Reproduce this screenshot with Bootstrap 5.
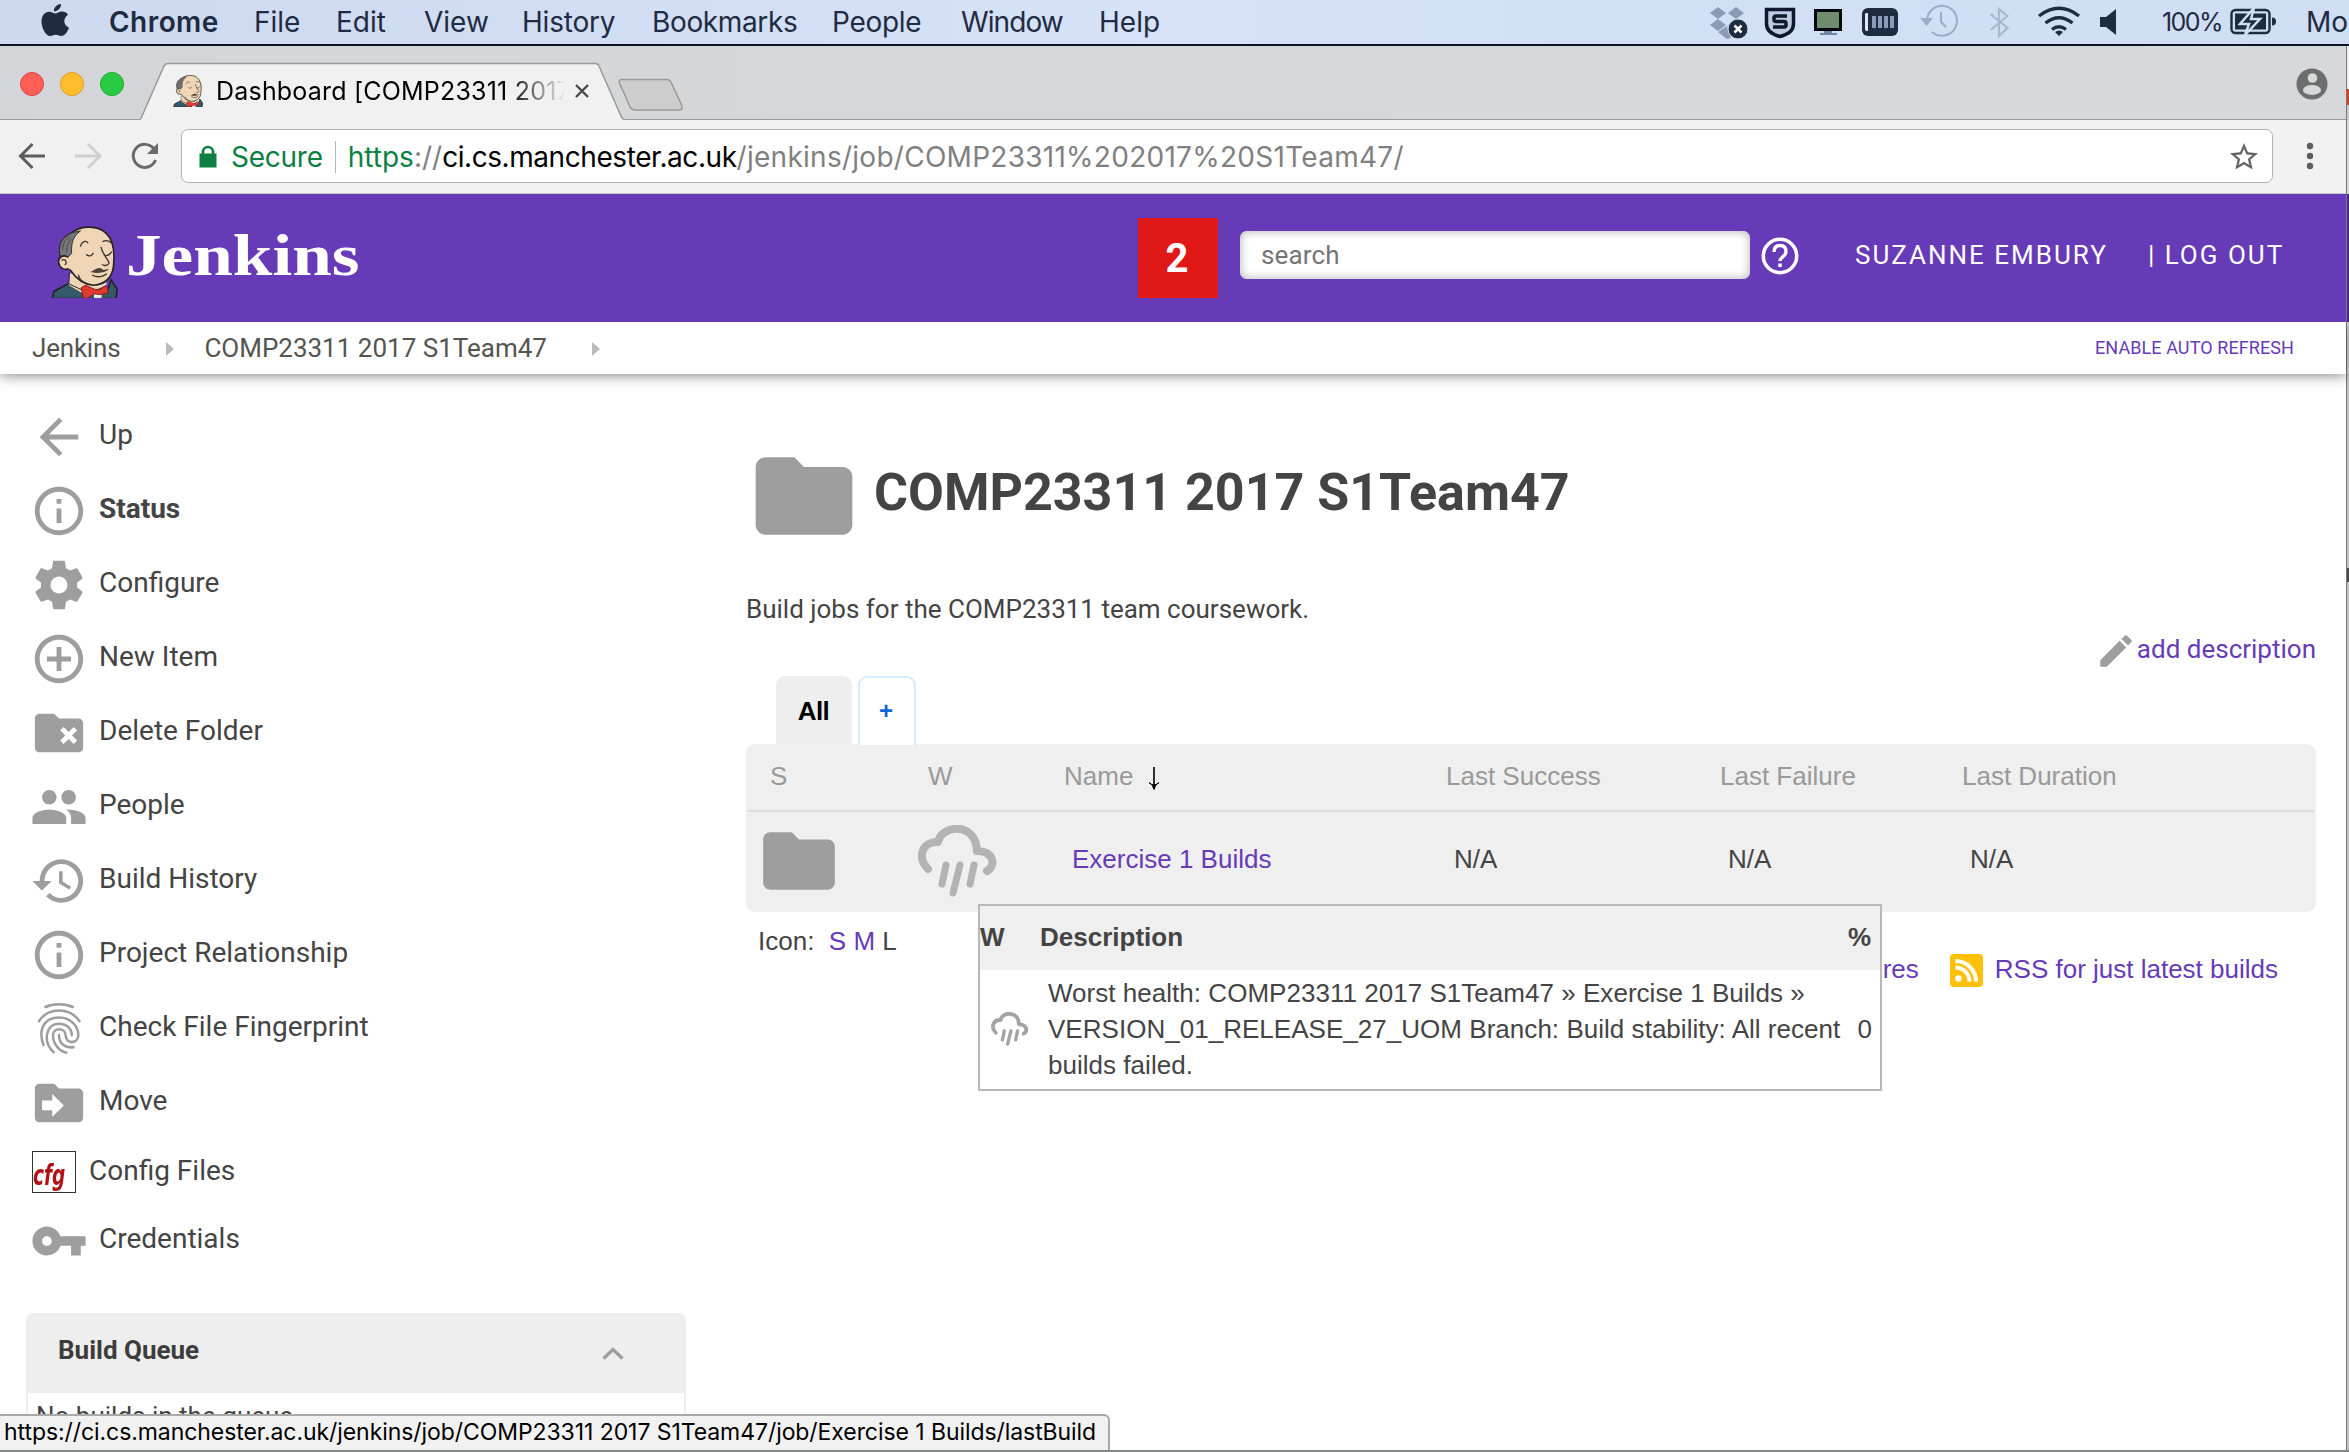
<!DOCTYPE html>
<html lang="en">
<head>
<meta charset="utf-8">
<title>Dashboard [COMP23311 2017 S1Team47]</title>
<link href="https://cdn.jsdelivr.net/npm/bootstrap@5.3.0/dist/css/bootstrap.min.css" rel="stylesheet">
<style>
html,body{height:1452px;overflow:hidden}
body{font:26px/36px Roboto,sans-serif;color:#444;background:#fff}
svg{flex:none;display:block}
a{color:#673ab7;text-decoration:none}
.inter{font-family:Inter,sans-serif}
.helv{font-family:"Liberation Sans",sans-serif}
.ln{white-space:nowrap}
/* system menu bar */
.menubar{height:46px;background:linear-gradient(90deg,#ccd9ee,#d5e2f7 50%,#cfdef5);border-bottom:2px solid #0b1426;font-size:28px;line-height:44px;color:#1e2b42}
.menubar li{flex:none}
.menubar li:nth-child(1){width:109px}.menubar li:nth-child(2){width:145px;font-weight:600;letter-spacing:.45px}
.menubar li:nth-child(3){width:82px}.menubar li:nth-child(4){width:88px}.menubar li:nth-child(5){width:98px}
.menubar li:nth-child(6){width:130px;letter-spacing:-.2px}.menubar li:nth-child(7){width:180px;letter-spacing:-.36px}
.menubar li:nth-child(8){width:129px;letter-spacing:-.3px}.menubar li:nth-child(9){width:138px;letter-spacing:-.9px}
.pct{width:69px;padding-left:2px;font-size:25px;letter-spacing:-1.6px}
.clock{width:44px;overflow:hidden;padding-left:1px}
/* browser window */
.tabstrip{height:73px;background:linear-gradient(90deg,#d4d5d8,#d5d8da 55%,#d7d8db)}
.lights{width:140px;padding:26px 0 0 20px;gap:16px}
.lights i{width:24px;height:24px;border-radius:50%;border:1px solid #e0443e;background:#ff5f57}
.lights i:nth-child(2){background:#ffbd2e;border-color:#dea123}.lights i:nth-child(3){background:#28ca41;border-color:#1aab29}
.tabx{width:484px;height:58px;margin-top:16px;padding-left:33px;z-index:2}
.tabx .shape{position:absolute;left:0;top:0}
.tabt{width:356px;margin-left:13px;overflow:hidden;font-size:25px;letter-spacing:.2px;line-height:56px;color:#000;-webkit-mask-image:linear-gradient(90deg,#000 82%,transparent 98%)}
.newtab{margin-left:-8px}
.toolbar{height:75px;background:#f1f1f1;border-top:1px solid #9b9b9d;border-bottom:1px solid #c6c6c6}
.omni{width:2092px;height:54px;margin-top:9px;padding-top:1px;background:#fff;border:1px solid #b3b3b3;border-radius:7px;font-size:28px;line-height:52px;color:#808080}
.grn{color:#0b8043}
.sepv{width:1px;height:32px;background:#b5b5b5;margin:0 12px 0 12px}
/* jenkins header */
.jhead{height:128px;background:#673ab7;padding:0 0 6px 51px;color:#fff}
.wordmark{font:bold 60px/60px "Liberation Serif",serif;transform:scaleX(1.187);transform-origin:0 50%;margin-left:8px;margin-bottom:1px}
.alertbox{width:80px;height:80px;margin-top:6px;margin-right:22px;padding-right:2px;background:#e01818;font-size:40px;line-height:81px}
.jsearch{width:510px;height:48px;margin-top:-1px;border-radius:7px;border:0;background:#fff;box-shadow:inset 0 0 8px 1px #bbb;color:#757575;font-size:26px;padding:1px 0 0 21px;letter-spacing:.15px}
.user{letter-spacing:2px}
.crumbs{height:52px;padding:0 52px 1px 32px;background:#fff;box-shadow:0 2px 12px rgba(0,0,0,.45);color:#54554f;position:relative}
.jhead{position:relative;z-index:2}
.crumbs{z-index:1}
.refresh{font-size:18px;letter-spacing:.09px;padding-top:1px}
.strip{width:3px;border-left:1px solid #77777a;background:linear-gradient(#efefef 0 43px,#d8401e 43px 59px,#c9c9c9 59px 74px,#d5d5d5 74px 148px,#4d2c87 148px 276px,#dadada 276px 328px,#c3c3c3 328px 522px,#4a4a4a 522px 536px,#c3c3c3 536px)}
/* side panel */
.side{width:746px;padding-top:24px}
.task{height:74px;padding-left:30px;font-size:28px;color:#444}
.task svg{fill:#9e9e9e;margin-top:4px;margin-right:11px}
.cfgico{width:44px;height:42px;border:1px solid #333;margin:1px 13px 0 2px;font:italic bold 29px/46px "DejaVu Sans",sans-serif;color:#b01116;letter-spacing:0}
.cfgico span{display:block;transform:scaleX(.64);transform-origin:0 0}
.queue{width:660px;margin:40px 0 0 26px;border:2px solid #eee;border-radius:8px 8px 0 0;height:170px}
.queue h2{height:78px;margin:0;padding:0 60px 7px 30px;background:#eee;font-size:26px;font-weight:700;color:#3c3c3c}
/* main panel */
.mainp{width:1570px;padding-top:64px}
.mainp h1{font-size:52px;line-height:60px;font-weight:700;margin:0;padding:0 0 6px 12px;color:#444}
.views{height:68px;margin-top:4px;padding-left:30px;gap:6px}
.views a{height:69px;line-height:70px;font-weight:700;border-radius:9px 9px 0 0;text-align:center}
.views .on{width:76px;background:#eee;color:#000;letter-spacing:-.6px;padding-right:1px}
.views .plus{width:58px;border:2px solid #d5ecfc;border-bottom:0;background:#fff;color:#0b64d8;font-size:24px;line-height:66px;padding-right:2px}
.jobs{height:168px;background:#efefef;border-radius:9px;padding:0 2px}
.jobs table{table-layout:fixed;width:1566px;margin:0;--bs-table-bg:transparent;color:#444}
.jobs .table>thead>tr>th{height:67px;font-weight:400;color:#999;padding:0 0 2px 14px;line-height:64px;border-bottom:2px solid #dcdcdc}
.jobs .table>thead>tr>th.ic{padding-left:22px}
.jobs .table>tbody>tr>td{height:100px;padding:0 0 6px 22px;border:0;vertical-align:middle}
.jobs .table>tbody>tr>td.ic{padding:0 0 2px 8px}
.tip{left:978px;top:904px;width:904px;height:187px;border:2px solid #b8b8b8;background:#fff;z-index:5}
.tip .th{height:64px;background:#efefef;font-weight:700;padding:0 9px 0 0;line-height:62px}
.statusurl{left:0;top:1414px;width:1110px;height:36px;background:#f1f1f1;border:solid #a9a9a9;border-width:2px 2px 0 0;border-radius:0 6px 0 0;font-size:23px;line-height:33px;letter-spacing:-.07px;color:#000;padding-left:4px;z-index:6}
.winbottom{left:0;top:1450px;width:2349px;height:2px;background:#85868a;z-index:7}
</style>
</head>
<body class="d-flex flex-column position-relative">
<svg width="0" height="0" class="position-absolute">
<symbol id="butler" viewBox="33 48 202 216">
<path d="M37 266L42 244L88 220L120 240L205 238L214 210L233 238L228 266Z" fill="#35586a" stroke="#1d2326" stroke-width="5"/>
<path d="M90 190L86 225L128 250L170 240L200 225L200 200Z" fill="#f0d6b7"/>
<path d="M88 188L87 222L126 240" fill="none" stroke="#2a2522" stroke-width="3"/>
<path d="M62 142C52 105 64 82 98 66C125 45 175 46 198 68C222 90 225 125 222 160C222 190 205 225 160 226C125 222 108 205 94 184Z" fill="#f0d6b7" stroke="#262220" stroke-width="5"/>
<path d="M62 142C52 105 64 84 96 68L122 62C98 80 94 100 95 130L84 142C78 134 66 136 62 142Z" fill="#77767a" stroke="#333" stroke-width="3"/>
<path d="M68 120C68 100 76 88 92 80M80 125C80 108 84 98 96 86" fill="none" stroke="#4a4a4c" stroke-width="3"/>
<path d="M84 142C70 132 54 142 56 158C58 174 74 182 88 176" fill="#f0d6b7" stroke="#262220" stroke-width="5"/>
<path d="M84 146L98 138L100 180L86 176Z" fill="#f0d6b7"/>
<path d="M66 150C76 146 82 154 76 164M122 108C126 94 138 90 144 98M190 94C198 90 208 92 214 98M140 134C148 140 156 138 160 130M194 136C202 138 210 134 215 126M184 112C188 134 208 150 208 160C204 168 192 168 188 164M158 196C174 204 192 200 200 192M116 196C118 206 124 212 130 216" fill="none" stroke="#3a322c" stroke-width="4" stroke-linecap="round"/>
<path d="M152 186C164 182 172 170 186 176C192 184 200 176 208 178C196 188 176 192 152 186Z" fill="#4d4039"/>
<circle cx="174" cy="258" r="12" fill="#e8e8e8"/>
<path d="M124 234L136 226L164 238L178 240L198 228L204 234L204 250L182 254L164 252L140 266L130 262Z" fill="#df3a2f" stroke="#8e1b16" stroke-width="3"/>
</symbol>
<symbol id="fold" viewBox="0 0 24 24"><path d="M10 4H4c-1.1 0-2 .9-2 2v12c0 1.1.9 2 2 2h16c1.100 0 2-.9 2-2V8c0-1.100-.9-2-2-2h-8z" fill="#9e9e9e"/></symbol>
<symbol id="rain" viewBox="0 0 80 72"><g fill="none" stroke-width="8" stroke-linecap="round" stroke-linejoin="round"><path d="M11 44C-1 32 6 16 21 17C25 -1 59 -3 60 26C76 26 80 40 70 46"/><path d="M29 40L25 59M43 40L36 68M57 40L53 59" stroke-width="7"/></g></symbol>
</svg>

<nav class="menubar inter d-flex">
<ul class="list-unstyled d-flex m-0 ln">
<li><svg width="80" height="44" viewBox="0 0 80 44"><path d="M61 4c.4 4-3.500 7.500-7 7.400C53.500 7.500 57.500 4 61 4zM55 13.500c2 0 4-2 7-2 2.500 0 4.600 1.200 6 3.200-5.500 3.500-4.500 10.500 1 13-1.500 4-4.500 8.300-7.500 8.300-2.200 0-3.200-1.300-5.800-1.300S52 36 50 36c-4 0-8.500-8-8.500-14.500 0-6.300 3.800-9.700 7.500-9.700 2.500 0 4.500 1.700 6 1.700z" fill="#1e2b42"/></svg></li>
<li>Chrome</li><li>File</li><li>Edit</li><li>View</li><li>History</li><li>Bookmarks</li><li>People</li><li>Window</li><li>Help</li>
</ul>
<div class="d-flex ms-auto ln">
<svg width="50" height="44" viewBox="1706 0 50 44"><g fill="#8b9ab5"><path d="M1710 13l8-6 8 6-8 6zM1728 13l8-6 8 6-8 6zM1710 25l8-6 8 6-8 6zM1728 25l8-6 8 6-8 6zM1718 32l9-6 4 12-4 1z"/></g><circle cx="1738" cy="29" r="10" fill="#1e2b42" stroke="#d3e0f5"/><path d="M1734.500 25.500l7 7m0-7l-7 7" stroke="#fff" stroke-width="2.500"/></svg>
<svg width="50" height="44" viewBox="1756 0 50 44"><path d="M1766.500 9.500h27V24q0 9-13.500 12.500Q1766.500 33 1766.500 24z" fill="#bccbe6" stroke="#10182c" stroke-width="3.500"/><path d="M1787 16h-11q-2 0-2 2v1.500q0 2 2 2h8q2 0 2 2V25q0 2-2 2h-11" fill="none" stroke="#10182c" stroke-width="3.500"/></svg>
<svg width="50" height="44" viewBox="1806 0 50 44"><path d="M1815.500 10.500h25v19h-25z" fill="#6f8d6e" stroke="#05080f" stroke-width="3"/><path d="M1824 31h8v2h5v2h-17v-2h4z" fill="#6e83a6"/></svg>
<svg width="50" height="44" viewBox="1856 0 50 44"><rect x="1862" y="8" width="36" height="28" rx="6" fill="#1e2b42"/><path d="M1865 14v15q0 2 2 2h1V13h-1q-2 0-2 1z" fill="#dfe9fa"/><path d="M1872 16h4v12h-4zM1878 16h4v12h-4zM1884 16h4v12h-4zM1890 16h4v12h-4z" fill="#8b9ab5"/></svg>
<svg width="70" height="44" viewBox="1906 0 70 44"><path d="M1927 21a15 15 0 1 1 5 11M1941 12v10l5 5" fill="none" stroke="#9dadc8" stroke-width="2"/><path d="M1920 18h13l-6.500 8z" fill="#9dadc8"/></svg>
<svg width="48" height="44" viewBox="1976 0 48 44"><path d="M1990.500 14l17 14-8.500 8V9l8.500 7-17 14" fill="none" stroke="#a9b8d1" stroke-width="2.200"/></svg>
<svg width="68" height="44" viewBox="2024 0 68 44"><g fill="none" stroke="#1e2b42" stroke-width="3.400"><path d="M2039 16q20-15.500 40 0M2045.500 23q13.500-10.500 27 0M2052 29.500q7-5.500 14 0"/></g><path d="M2059 36l-4-4q4-3 8 0z" fill="#1e2b42"/></svg>
<svg width="68" height="44" viewBox="2092 0 68 44"><path d="M2100 17h6l10-8v26l-10-8h-6z" fill="#1e2b42"/></svg>
<span class="pct">100%</span>
<svg width="76" height="44" viewBox="2229 0 76 44"><rect x="2231.500" y="10" width="38" height="23" rx="4" fill="none" stroke="#1e2b42" stroke-width="2.400"/><rect x="2235" y="13.500" width="31" height="16" fill="#1e2b42"/><path d="M2272 17.500q4 0 4 4t-4 4z" fill="#1e2b42"/><path d="M2254 8l-14 16h9l-4 11 15-16h-9z" fill="#1e2b42" stroke="#d0dff5" stroke-width="2.500"/></svg>
<span class="clock">Mon</span>
</div>
</nav>

<div class="d-flex flex-grow-1">
<div class="d-flex flex-column flex-grow-1">
<div class="tabstrip d-flex">
<div class="lights d-flex"><i></i><i></i><i></i></div>
<div class="tabx d-flex align-items-center position-relative">
<svg class="shape" width="484" height="59" viewBox="0 0 484 59"><path d="M-1 57.500Q1 57 2 54L24 4Q25.500 1.500 28 1.500H455Q458 1.500 459 4L481 54Q482 57 485 57.500V59H-1z" fill="#f1f1f1"/><path d="M-1 57.500Q1 57 2 54L24 4Q25.500 1.500 28 1.500H455Q458 1.500 459 4L481 54Q482 57 485 57.500" fill="none" stroke="#98999c" stroke-width="1.500"/></svg>
<svg class="position-relative" width="30" height="32"><use href="#butler"/></svg>
<span class="tabt inter ln position-relative">Dashboard [COMP23311 2017</span>
<svg class="position-relative" width="20" height="20" viewBox="0 0 20 20"><path d="M4 4l12 12M16 4L4 16" stroke="#4a4a4a" stroke-width="2.400"/></svg>
</div>
<svg class="newtab" width="70" height="73" viewBox="616 46 70 73"><path d="M622 79.500H666Q670 79.500 671.500 83L682 106Q683 110 679 110H636Q632 110 630 107L619.500 83Q618.500 79.500 622 79.500z" fill="#cdcdcd" stroke="#98999b" stroke-width="1.500"/></svg>
<svg class="ms-auto" width="50" height="73" viewBox="2296 46 50 73"><circle cx="2312" cy="84" r="15.500" fill="#6d6d6d"/><circle cx="2312.500" cy="78" r="4.800" fill="#d7d8db"/><ellipse cx="2312" cy="90" rx="9" ry="5" fill="#d7d8db"/></svg>
</div>
<div class="toolbar d-flex">
<svg width="181" height="73" viewBox="0 120 181 73"><g fill="none" stroke-width="3"><path d="M45 156H21M32.500 144L20.500 156l12 12" stroke="#5d5d5d"/><path d="M75 156h24M88 144l12 12-12 12" stroke="#cfcfcf"/><path d="M154 149A11.500 11.500 0 1 0 155.500 160" stroke="#6a6a6a"/></g><path d="M158 143v11h-11z" fill="#6a6a6a"/></svg>
<div class="omni inter d-flex align-items-center ln">
<svg class="ms-3" width="33" height="52" viewBox="198 130 33 52"><path d="M199.500 152.500h17v14h-17z" fill="#0b8043"/><path d="M203 154v-3a5 5 0 0 1 10 0v3" fill="none" stroke="#0b8043" stroke-width="2.600"/></svg>
<span class="grn" style="letter-spacing:-.25px">Secure</span><span class="sepv"></span><span class="grn">https</span><span>://</span><span class="text-black" style="letter-spacing:-.43px">ci.cs.manchester.ac.uk</span><span style="letter-spacing:.27px">/jenkins/job/COMP23311%202017%20S1Team47/</span>
<svg class="ms-auto" width="28" height="28" viewBox="2 2 20 20" style="margin-right:14px"><path d="M22 9.240l-7.190-.62L12 2 9.190 8.630 2 9.240l5.460 4.730L5.820 21 12 17.270 18.180 21l-1.630-7.030zM12 15.400l-3.760 2.270 1-4.280-3.320-2.880 4.380-.38L12 6.100l1.710 4.040 4.380.38-3.320 2.880 1 4.280z" fill="#666"/></svg>
</div>
<svg width="73" height="73" viewBox="2273 120 73 73" fill="#5d5d5d"><circle cx="2310" cy="146" r="3.200"/><circle cx="2310" cy="156" r="3.200"/><circle cx="2310" cy="166" r="3.200"/></svg>
</div>

<header class="jhead d-flex align-items-center ln">
<svg width="67" height="72" style="margin-top:14px"><use href="#butler"/></svg>
<span class="wordmark">Jenkins</span>
<div class="d-flex align-items-center ms-auto" style="width:1208px">
<span class="alertbox text-center fw-bold">2</span>
<input class="jsearch" type="text" value="search" aria-label="search">
<svg width="60" height="60" viewBox="1750 226 60 60"><circle cx="1780" cy="257" r="16.700" fill="none" stroke="#fff" stroke-width="3.500"/><path d="M1774 253q0-6.500 6-6.500t6 6q0 3-3.500 5.500-2.500 2-2.500 4" fill="none" stroke="#fff" stroke-width="3.400"/><path d="M1778.300 264.500h3.500v3.500h-3.500z" fill="#fff"/></svg>
<span class="user" style="margin-left:45px">SUZANNE EMBURY</span><span class="user" style="margin-left:40px">| LOG OUT</span>
</div>
</header>
<div class="crumbs d-flex align-items-center ln">
<span style="letter-spacing:-.2px">Jenkins</span>
<svg width="8" height="14" style="margin:2px 30px 0 46px" viewBox="0 0 8 14"><path d="M0 0l8 7-8 7z" fill="#bbb"/></svg>
<span>COMP23311 2017 S1Team47</span>
<svg width="8" height="14" style="margin:2px 0 0 45px" viewBox="0 0 8 14"><path d="M0 0l8 7-8 7z" fill="#bbb"/></svg>
<a class="refresh ms-auto" href="#">ENABLE AUTO REFRESH</a>
</div>

<div class="d-flex flex-grow-1">
<aside class="side ln">
<div class="task d-flex align-items-center"><svg width="58" height="58" viewBox="0 0 24 24"><path d="M20 11H7.830l5.590-5.590L12 4l-8 8 8 8 1.410-1.410L7.830 13H20z"/></svg>Up</div>
<div class="task d-flex align-items-center fw-bold"><svg width="58" height="58" viewBox="0 0 24 24"><path d="M11 17h2v-6h-2zm1-15C6.480 2 2 6.480 2 12s4.480 10 10 10 10-4.480 10-10S17.520 2 12 2zm0 18c-4.410 0-8-3.590-8-8s3.590-8 8-8 8 3.590 8 8-3.590 8-8 8zM11 9h2V7h-2z"/></svg>Status</div>
<div class="task d-flex align-items-center"><svg width="58" height="58" viewBox="0 0 24 24"><path d="M19.430 12.980c.04-.32.07-.64.07-.98s-.03-.66-.07-.98l2.110-1.650c.19-.15.240-.42.12-.64l-2-3.460c-.12-.22-.39-.3-.61-.22l-2.490 1c-.52-.4-1.080-.73-1.690-.98l-.38-2.650C14.460 2.180 14.250 2 14 2h-4c-.25 0-.46.18-.49.42l-.38 2.650c-.61.25-1.170.59-1.690.98l-2.490-1c-.23-.09-.49 0-.61.22l-2 3.460c-.13.22-.07.49.12.64l2.110 1.650c-.04.32-.07.65-.07.98s.03.66.07.98l-2.110 1.650c-.19.15-.24.42-.12.64l2 3.460c.12.22.39.3.61.22l2.490-1c.52.4 1.080.73 1.690.98l.38 2.650c.03.240.240.42.49.42h4c.25 0 .46-.18.49-.42l.38-2.650c.61-.25 1.170-.59 1.690-.98l2.490 1c.23.09.49 0 .61-.22l2-3.460c.12-.22.07-.49-.12-.64zM12 15.500c-1.930 0-3.500-1.570-3.500-3.500s1.570-3.500 3.500-3.500 3.500 1.570 3.500 3.500-1.570 3.500-3.500 3.500z"/></svg>Configure</div>
<div class="task d-flex align-items-center"><svg width="58" height="58" viewBox="0 0 24 24"><path d="M13 7h-2v4H7v2h4v4h2v-4h4v-2h-4zm-1-5C6.480 2 2 6.480 2 12s4.480 10 10 10 10-4.480 10-10S17.520 2 12 2zm0 18c-4.410 0-8-3.590-8-8s3.590-8 8-8 8 3.590 8 8-3.590 8-8 8z"/></svg>New Item</div>
<div class="task d-flex align-items-center"><svg width="58" height="58" viewBox="0 0 24 24"><path d="M10 4H4c-1.100 0-2 .9-2 2v12c0 1.100.9 2 2 2h16c1.100 0 2-.9 2-2V8c0-1.100-.9-2-2-2h-8z"/><path d="M13.200 10.200l5.600 5.600m0-5.600l-5.600 5.600" stroke="#fff" stroke-width="2"/></svg>Delete Folder</div>
<div class="task d-flex align-items-center"><svg width="58" height="58" viewBox="0 0 24 24"><path d="M16 11c1.660 0 2.990-1.340 2.990-3S17.660 5 16 5s-3 1.340-3 3 1.340 3 3 3zm-8 0c1.660 0 2.990-1.340 2.990-3S9.660 5 8 5 5 6.340 5 8s1.340 3 3 3zm0 2c-2.330 0-7 1.170-7 3.500V19h14v-2.500C15 14.170 10.330 13 8 13zm8 0c-.29 0-.62.02-.97.05 1.160.84 1.970 1.970 1.970 3.450V19h6v-2.500c0-2.330-4.670-3.500-7-3.500z"/></svg>People</div>
<div class="task d-flex align-items-center"><svg width="58" height="58" viewBox="0 0 24 24"><path d="M13 3a9 9 0 0 0-9 9H1l3.890 3.890L9 12H6c0-3.870 3.130-7 7-7s7 3.130 7 7-3.130 7-7 7c-1.930 0-3.680-.79-4.940-2.060l-1.420 1.420A8.950 8.950 0 0 0 13 21a9 9 0 0 0 0-18zm-1 5v5l4.280 2.540.72-1.210-3.500-2.080V8z"/></svg>Build History</div>
<div class="task d-flex align-items-center"><svg width="58" height="58" viewBox="0 0 24 24"><path d="M11 17h2v-6h-2zm1-15C6.480 2 2 6.480 2 12s4.480 10 10 10 10-4.480 10-10S17.520 2 12 2zm0 18c-4.410 0-8-3.590-8-8s3.590-8 8-8 8 3.590 8 8-3.590 8-8 8zM11 9h2V7h-2z"/></svg>Project Relationship</div>
<div class="task d-flex align-items-center"><svg width="58" height="58" viewBox="0 0 24 24"><g fill="none" stroke="#9e9e9e" stroke-width="1.050" stroke-linecap="round"><path d="M6.400 2.900C9.500 1.400 14.500 1.400 17.700 2.900M3.700 8.800C7.500 2.900 16.500 2.900 20.500 8.800M5.600 18.600C3.500 13.200 5 7.200 12 7.200c5 0 8 3.800 8 7.300 0 3.800-5.300 3.900-5.300 0 0-3.200-5.200-3.200-5.200 0 0 4.200 3.200 7 5.600 7.300M9.800 21.600C5.200 17.500 6.300 9.800 12.100 9.800c3 0 5.200 2 5.200 4.800M18 19.500c-3.500.6-6-1.500-6-5"/></g></svg>Check File Fingerprint</div>
<div class="task d-flex align-items-center"><svg width="58" height="58" viewBox="0 0 24 24"><path d="M10 4H4c-1.100 0-2 .9-2 2v12c0 1.100.9 2 2 2h16c1.100 0 2-.9 2-2V8c0-1.100-.9-2-2-2h-8z"/><path d="M5 11h4.200V8.300L14 13l-4.800 4.800V15H5z" fill="#fff"/></svg>Move</div>
<div class="task d-flex align-items-center" style="height:66px"><div class="cfgico"><span>cfg</span></div>Config Files</div>
<div class="task d-flex align-items-center" style="height:69px"><svg width="58" height="58" viewBox="0 0 24 24"><path d="M12.650 10A5.990 5.990 0 0 0 7 6c-3.310 0-6 2.690-6 6s2.690 6 6 6a5.990 5.990 0 0 0 5.650-4H17v4h4v-4h2v-4zM7 14c-1.100 0-2-.9-2-2s.9-2 2-2 2 .9 2 2-.9 2-2 2z"/></svg>Credentials</div>
<div class="queue"><h2 class="d-flex align-items-center justify-content-between">Build Queue<svg width="22" height="13" viewBox="0 0 22 13" style="margin-top:5px"><path d="M1.500 11.500L11 2.500l9.500 9" fill="none" stroke="#9e9e9e" stroke-width="3.400"/></svg></h2><div style="padding:5px 0 0 8px">No builds in the queue.</div></div>
</aside>

<main class="mainp">
<div class="d-flex align-items-center"><svg width="116" height="116"><use href="#fold"/></svg><h1>COMP23311 2017 S1Team47</h1></div>
<div style="margin-top:37px">Build jobs for the COMP23311 team coursework.</div>
<div class="d-flex justify-content-end align-items-center" style="height:42px;margin-top:3px"><svg width="42" height="42" viewBox="0 0 24 24"><path d="M3 17.250V21h3.750L17.810 9.940l-3.750-3.750zM20.710 7.040a1 1 0 0 0 0-1.410l-2.340-2.340a1 1 0 0 0-1.410 0l-1.830 1.830 3.750 3.750z" fill="#9e9e9e"/></svg><a href="#" class="pb-1">add description</a></div>
<div class="views helv d-flex"><a class="on" href="#">All</a><a class="plus" href="#">+</a></div>
<div class="jobs helv">
<table class="table">
<colgroup><col style="width:157px"><col style="width:145px"><col style="width:382px"><col style="width:274px"><col style="width:242px"><col></colgroup>
<thead><tr><th class="ic">S</th><th class="ic" style="padding-left:23px">W</th><th><span class="d-flex align-items-center">Name<svg width="14" height="24" viewBox="0 0 14 24" style="margin:6px 0 0 14px"><path d="M7 0v22" stroke="#000" stroke-width="1.600"/><path d="M2 15.500q4 2 5 7 1-5 5-7-3 2.500-5 2.500t-5-2.500z" fill="#000" stroke="#000"/></svg></span></th><th>Last Success</th><th>Last Failure</th><th>Last Duration</th></tr></thead>
<tbody><tr><td class="ic"><svg width="86" height="86"><use href="#fold"/></svg></td><td class="ic" style="padding-left:12px"><svg width="80" height="72" stroke="#b3b3b3"><use href="#rain"/></svg></td><td><a href="#">Exercise 1 Builds</a></td><td>N/A</td><td>N/A</td><td>N/A</td></tr></tbody>
</table>
</div>
<div class="helv d-flex justify-content-between ln" style="padding:11px 38px 0 12px">
<div>Icon:&nbsp; <a href="#">S</a> <a href="#">M</a> L</div>
<div class="d-flex align-items-center" style="margin-top:28px"><a href="#" style="margin-right:31px">RSS for failures</a>
<svg width="33" height="33" viewBox="0 0 33 33" style="margin:3px 12px 0 0"><rect width="33" height="33" rx="4" fill="#ffc107"/><circle cx="8.500" cy="24.500" r="3.200" fill="#fff"/><path d="M5.500 13.500a14 14 0 0 1 14 14M5.500 7a20.500 20.500 0 0 1 20.500 20.500" fill="none" stroke="#fff" stroke-width="4"/></svg>
<a href="#">RSS for just latest builds</a></div>
</div>
</main>
</div>
</div>
<div class="strip"></div>
</div>

<div class="tip helv position-absolute">
<div class="th d-flex"><span style="width:60px">W</span><span>Description</span><span class="ms-auto">%</span></div>
<div class="d-flex align-items-center ln" style="padding:5px 8px 0 10px"><svg width="39" height="34"  stroke="#a3a3a3"><use href="#rain"/></svg><span style="margin-left:19px;letter-spacing:.03px">Worst health: COMP23311 2017 S1Team47 » Exercise 1 Builds »<br>VERSION_01_RELEASE_27_UOM Branch: Build stability: All recent<br>builds failed.</span><span class="ms-auto">0</span></div>
</div>
<div class="statusurl inter position-absolute ln">https://ci.cs.manchester.ac.uk/jenkins/job/COMP23311 2017 S1Team47/job/Exercise 1 Builds/lastBuild</div>
<div class="winbottom position-absolute"></div>
<script src="https://cdn.jsdelivr.net/npm/bootstrap@5.3.0/dist/js/bootstrap.bundle.min.js"></script>
</body>
</html>
